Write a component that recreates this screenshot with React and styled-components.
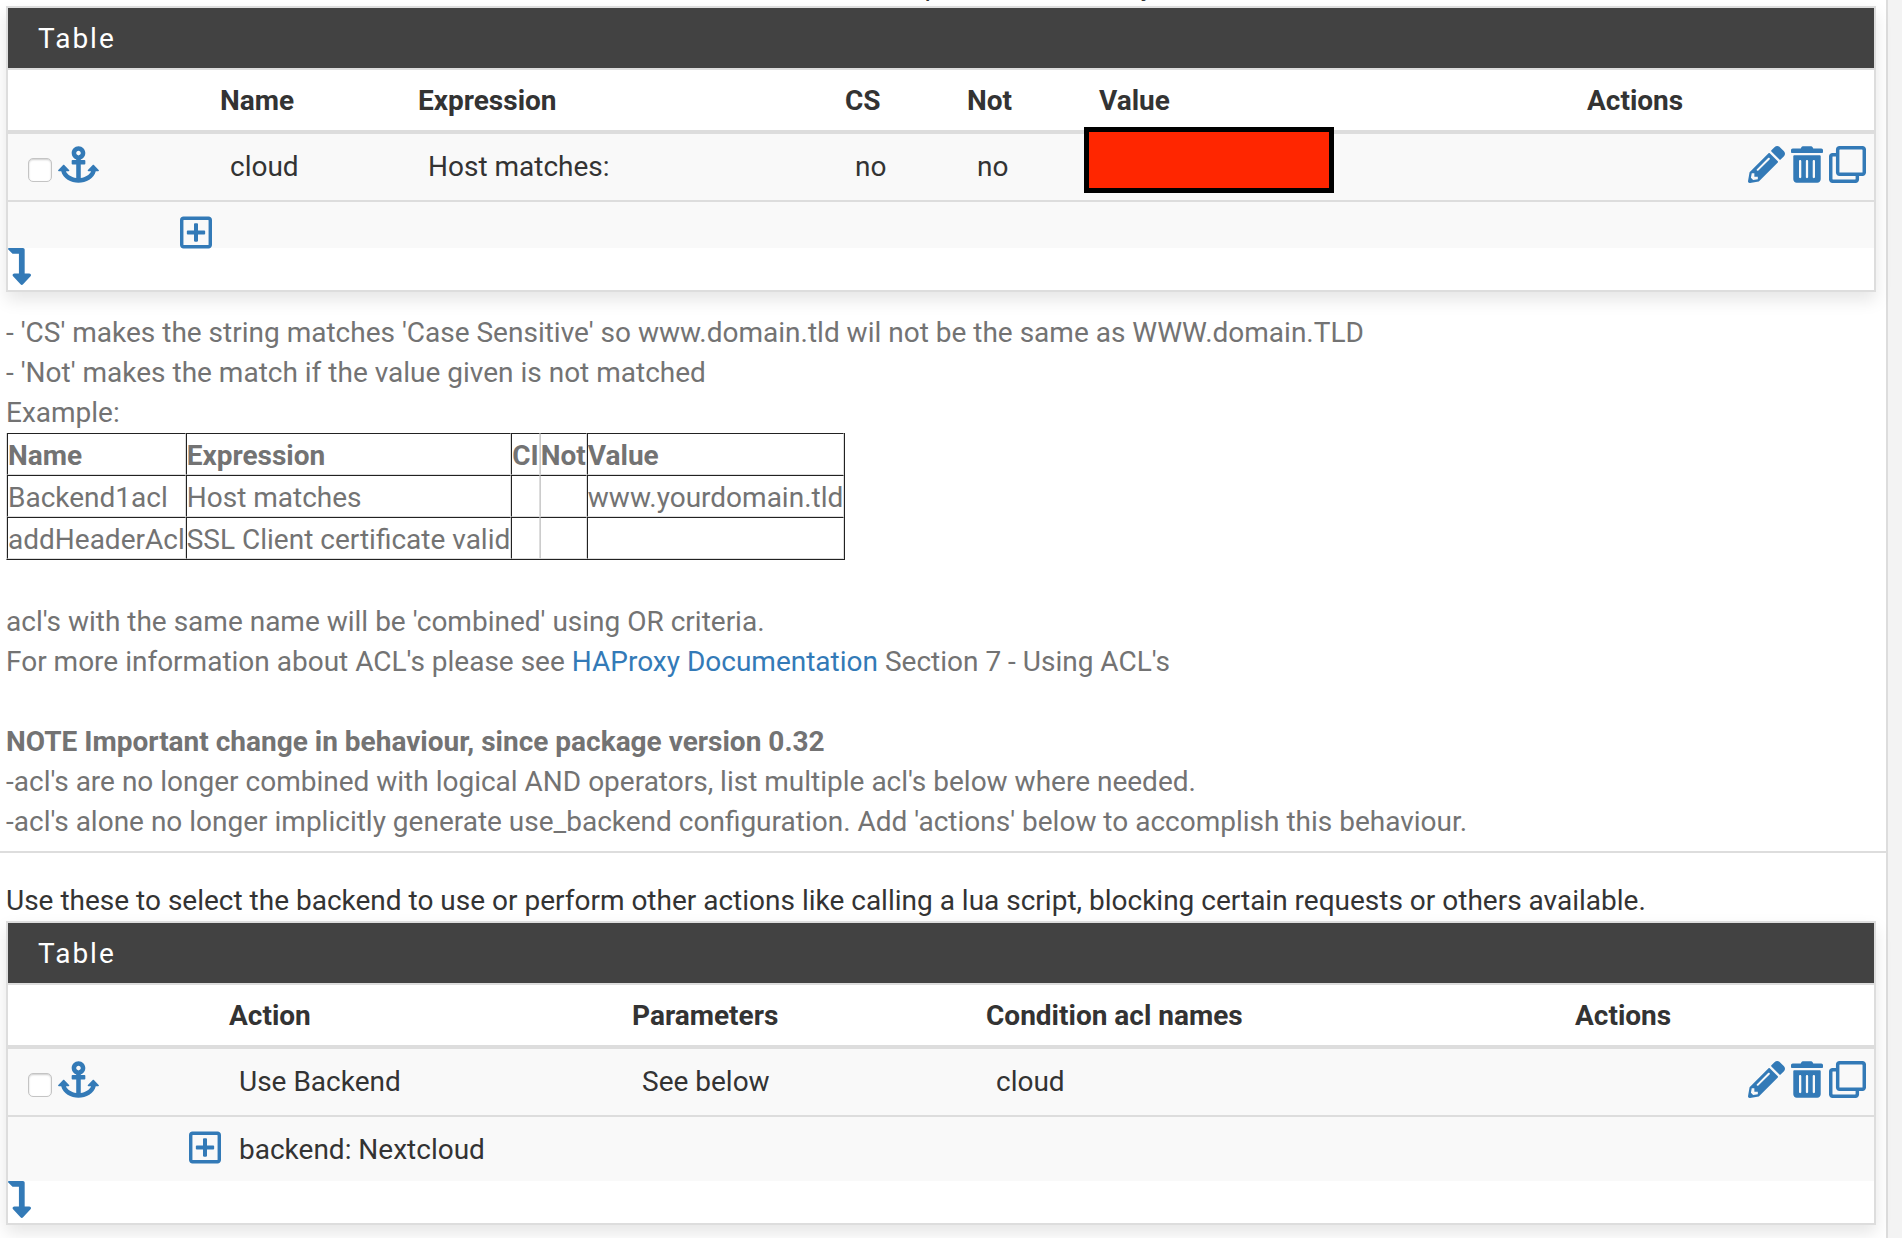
import React from "react";
import styled, { createGlobalStyle } from "styled-components";
import {
  FaAnchor,
  FaPencilAlt,
  FaRegClone,
  FaRegPlusSquare,
  FaLevelDownAlt,
} from "react-icons/fa";

const GlobalStyle = createGlobalStyle`
  *, *::before, *::after { box-sizing: border-box; }
  body {
    margin: 0;
    background: #f3f3f3;
    color: #333;
    font-family: Roboto, "Liberation Sans", sans-serif;
    font-size: 28px;
    line-height: 40px;
    overflow: hidden;
  }
`;

const Page = styled.main`
  min-height: 100vh;
  margin-right: 14px;
  border-right: 2px solid #ddd;
  background: #fff;
`;

const ClippedIntro = styled.div`
  display: flex;
  align-items: flex-end;
  height: 6px;
  padding: 0 6px;
  overflow: hidden;
  white-space: nowrap;
`;

const Section = styled.section`
  padding: ${(p) => (p.$ruled ? "28px 10px 14px 6px" : "0 10px 9px 6px")};
  border-top: ${(p) => (p.$ruled ? "2px solid #ddd" : "0")};
`;

const Intro = styled.p`
  margin: 0;
`;

const Panel = styled.div`
  border: 2px solid #ddd;
  background: #fff;
  box-shadow: 0 8px 16px rgba(0, 0, 0, 0.1);
`;

const PanelHeading = styled.h2`
  margin: 0;
  padding: 11px 30px 9px;
  background: #424242;
  color: #fff;
  font-size: 28px;
  font-weight: 400;
  line-height: 40px;
  letter-spacing: 2px;
`;

const DataTable = styled.table`
  width: 100%;
  table-layout: fixed;
  border-collapse: separate;
  border-spacing: 0;
  border-top: 2px solid #ddd;
`;

const Col = styled.col`
  width: ${(p) => (p.$width ? `${p.$width}px` : "auto")};
`;

const HeadCell = styled.th`
  padding: 11px 8px 9px;
  border-bottom: 4px solid #ddd;
  text-align: left;
  font-weight: 700;
`;

const Cell = styled.td`
  position: relative;
  height: 66px;
  padding: 13px 8px 0 18px;
  background: #f9f9f9;
  vertical-align: top;
`;

const ToolCell = styled(Cell)`
  padding-top: 12px;
`;

const DetailCell = styled.td`
  height: ${(p) => (p.$tall ? "66px" : "48px")};
  padding: ${(p) => (p.$tall ? "13px" : "0")} 8px 0 18px;
  border-top: 2px solid #ddd;
  background: #f9f9f9;
  vertical-align: top;
`;

const ExpandCell = styled(DetailCell)`
  padding: 14px 0 0;
`;

const RowTools = styled.div`
  display: flex;
  align-items: flex-end;
  justify-content: ${(p) => (p.$end ? "flex-end" : "flex-start")};
  gap: 6px;
  padding-left: 2px;
`;

const IconButton = styled.button`
  display: flex;
  align-items: center;
  justify-content: center;
  height: ${(p) => (p.$small ? "32px" : "37px")};
  margin: 0 0 0 ${(p) => (p.$small ? "auto" : "0")};
  padding: 0;
  border: 0;
  background: transparent;
  color: #337ab7;
  cursor: pointer;

  svg {
    flex: none;
    display: block;
    width: ${(p) => p.$glyph}px;
    height: 37px;
  }
`;

const Checkbox = styled.input`
  appearance: none;
  width: 24px;
  height: 24px;
  margin: 0 0 1px;
  border: 1px solid #c4c4c4;
  border-radius: 5px;
  background: #fff;
  box-shadow: inset 0 1px 2px rgba(0, 0, 0, 0.2);
`;

const Redacted = styled.span`
  position: absolute;
  top: -7px;
  left: -7px;
  width: 250px;
  height: 66px;
  border: 5px solid #000;
  background: #ff2600;
`;

const PanelFooter = styled.div`
  height: 42px;
`;

const Help = styled.div`
  padding-top: 21px;
  color: #737373;
`;

const HelpText = styled.p`
  margin: 0 0 ${(p) => (p.$spaced ? "40px" : "0")};
`;

const Link = styled.a`
  color: #337ab7;
  text-decoration: none;
`;

const ExampleTable = styled.table`
  margin-bottom: 42px;
  border-collapse: separate;
  border-spacing: 0;
  border: 1px solid #222;
  border-top: 0;
  border-left-color: #ddd;
  line-height: 37px;

  th,
  td {
    height: 42px;
    padding: 3px 0 0;
    border: 1px solid #ddd;
    border-top-color: #222;
    border-left-color: #222;
    text-align: left;
  }

  th:nth-child(4),
  td:nth-child(4) {
    border-left-color: #ccc;
  }
`;

function TrashIcon() {
  return (
    <svg viewBox="0 0 448 512" fill="currentColor" aria-hidden="true">
      <path d="M0 84V56c0-13.3 10.7-24 24-24h112l9.4-18.7c4-8.2 12.3-13.3 21.4-13.3h114.3c9.1 0 17.4 5.1 21.5 13.3L312 32h112c13.3 0 24 10.7 24 24v28c0 6.6-5.4 12-12 12H12C5.4 96 0 90.6 0 84zm416 56v324c0 26.5-21.5 48-48 48H80c-26.5 0-48-21.5-48-48V140c0-6.6 5.4-12 12-12h360c6.6 0 12 5.4 12 12zm-272 68c0-8.8-7.2-16-16-16s-16 7.2-16 16v224c0 8.8 7.2 16 16 16s16-7.2 16-16V208zm96 0c0-8.8-7.2-16-16-16s-16 7.2-16 16v224c0 8.8 7.2 16 16 16s16-7.2 16-16V208zm96 0c0-8.8-7.2-16-16-16s-16 7.2-16 16v224c0 8.8 7.2 16 16 16s16-7.2 16-16V208z" />
    </svg>
  );
}

function SelectAnchor({ label }) {
  return (
    <RowTools>
      <Checkbox type="checkbox" aria-label={label} />
      <IconButton type="button" $glyph={41} aria-label="Move checked rows here">
        <FaAnchor />
      </IconButton>
    </RowTools>
  );
}

function RowActions() {
  return (
    <RowTools $end>
      <IconButton type="button" $glyph={37} aria-label="Edit">
        <FaPencilAlt />
      </IconButton>
      <IconButton type="button" $glyph={32} aria-label="Delete">
        <TrashIcon />
      </IconButton>
      <IconButton type="button" $glyph={37} aria-label="Duplicate">
        <FaRegClone />
      </IconButton>
    </RowTools>
  );
}

function ItemTable({ columns, cells, detail, label }) {
  return (
    <Panel>
      <PanelHeading>Table</PanelHeading>
      <DataTable>
        <colgroup>
          {columns.map((c) => (
            <Col key={c.id} $width={c.width} />
          ))}
        </colgroup>
        <thead>
          <tr>
            {columns.map((c) => (
              <HeadCell key={c.id} scope="col">
                {c.title}
              </HeadCell>
            ))}
          </tr>
        </thead>
        <tbody>
          <tr>
            <ToolCell>
              <SelectAnchor label={label} />
            </ToolCell>
            {cells.map((c, i) => (
              <Cell key={i}>{c}</Cell>
            ))}
            <ToolCell>
              <RowActions />
            </ToolCell>
          </tr>
          <tr>
            <ExpandCell $tall={Boolean(detail)}>
              <IconButton
                type="button"
                $small
                $glyph={32}
                aria-label="Show details"
              >
                <FaRegPlusSquare />
              </IconButton>
            </ExpandCell>
            <DetailCell $tall={Boolean(detail)} colSpan={columns.length - 1}>
              {detail}
            </DetailCell>
          </tr>
        </tbody>
      </DataTable>
      <PanelFooter>
        <IconButton type="button" $glyph={23} aria-label="Add row to the end">
          <FaLevelDownAlt />
        </IconButton>
      </PanelFooter>
    </Panel>
  );
}

const aclColumns = [
  { id: "select", title: "", width: 204 },
  { id: "name", title: "Name", width: 198 },
  { id: "expression", title: "Expression", width: 427 },
  { id: "cs", title: "CS", width: 122 },
  { id: "not", title: "Not", width: 132 },
  { id: "value", title: "Value" },
  { id: "actions", title: "Actions", width: 295 },
];

const actionColumns = [
  { id: "select", title: "", width: 213 },
  { id: "action", title: "Action", width: 403 },
  { id: "parameters", title: "Parameters", width: 354 },
  { id: "condition", title: "Condition acl names" },
  { id: "actions", title: "Actions", width: 307 },
];

export default function App() {
  return (
    <>
      <GlobalStyle />
      <Page>
        <ClippedIntro>
          <Intro>
            Use these to define criteria that will be used with actions defined
            below to perform them only when certain conditions are met.
          </Intro>
        </ClippedIntro>
        <Section>
          <ItemTable
            label="Select cloud"
            columns={aclColumns}
            cells={["cloud", "Host matches:", "no", "no", <Redacted />]}
          />
          <Help>
            <HelpText>
              - 'CS' makes the string matches 'Case Sensitive' so www.domain.tld
              wil not be the same as WWW.domain.TLD
              <br />
              - 'Not' makes the match if the value given is not matched
              <br />
              Example:
            </HelpText>
            <ExampleTable>
              <thead>
                <tr>
                  <th>Name</th>
                  <th>Expression</th>
                  <th>CI</th>
                  <th>Not</th>
                  <th>Value</th>
                </tr>
              </thead>
              <tbody>
                <tr>
                  <td>Backend1acl</td>
                  <td>Host matches</td>
                  <td />
                  <td />
                  <td>www.yourdomain.tld</td>
                </tr>
                <tr>
                  <td>addHeaderAcl</td>
                  <td>SSL Client certificate valid</td>
                  <td />
                  <td />
                  <td />
                </tr>
              </tbody>
            </ExampleTable>
            <HelpText $spaced>
              acl's with the same name will be 'combined' using OR criteria.
              <br />
              For more information about ACL's please see{" "}
              <Link href="#haproxy-documentation">HAProxy Documentation</Link>{" "}
              Section 7 - Using ACL's
            </HelpText>
            <HelpText>
              <b>
                NOTE Important change in behaviour, since package version 0.32
              </b>
              <br />
              -acl's are no longer combined with logical AND operators, list
              multiple acl's below where needed.
              <br />
              -acl's alone no longer implicitly generate use_backend
              configuration. Add 'actions' below to accomplish this behaviour.
            </HelpText>
          </Help>
        </Section>
        <Section $ruled>
          <Intro>
            Use these to select the backend to use or perform other actions like
            calling a lua script, blocking certain requests or others available.
          </Intro>
          <ItemTable
            label="Select Use Backend"
            columns={actionColumns}
            cells={["Use Backend", "See below", "cloud"]}
            detail="backend: Nextcloud"
          />
        </Section>
      </Page>
    </>
  );
}
